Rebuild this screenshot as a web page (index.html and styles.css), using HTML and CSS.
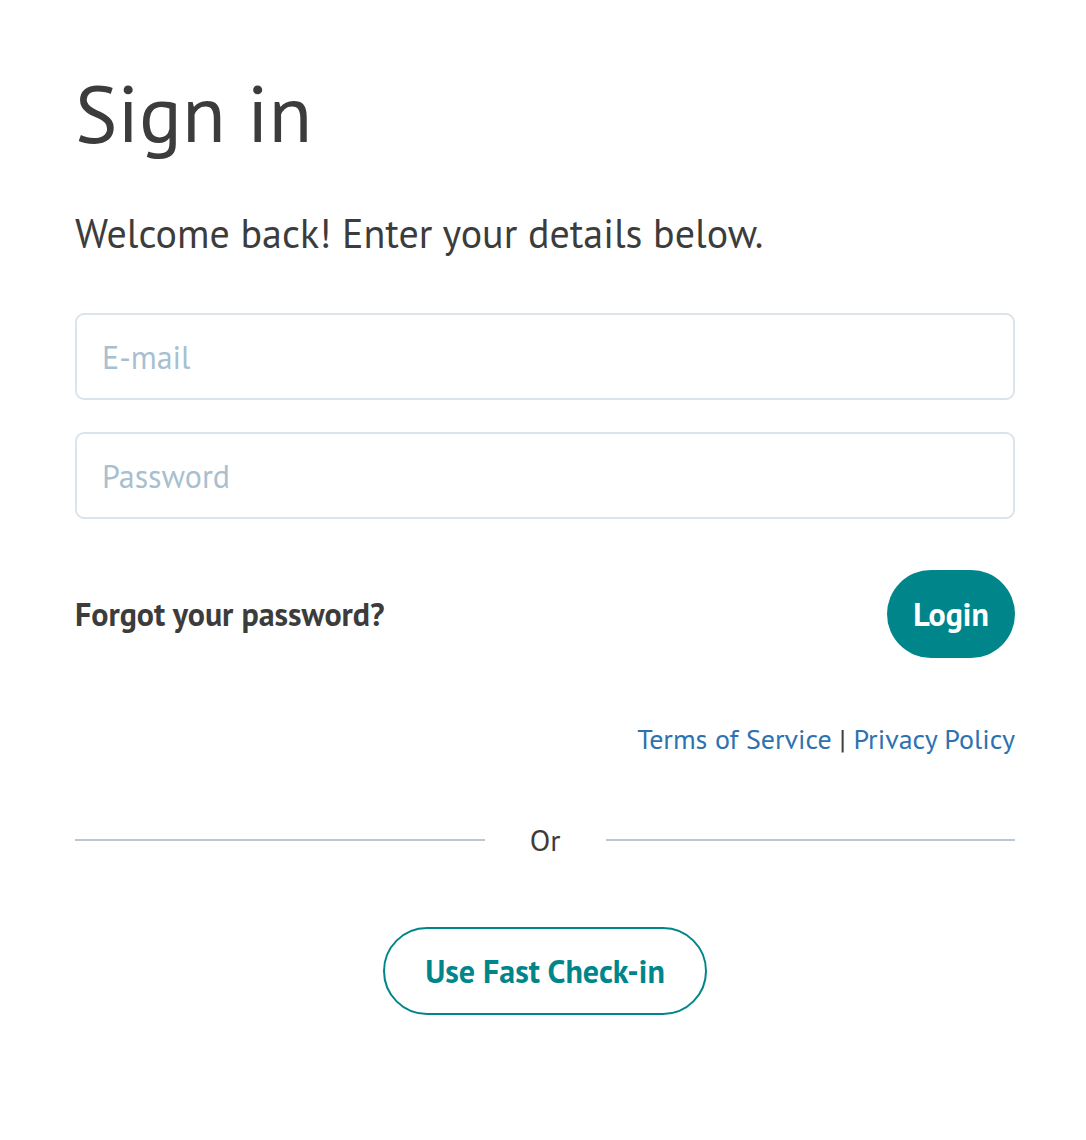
FILE: index.html
```html
<!DOCTYPE html>
<html lang="en">
<head>
    <meta charset="UTF-8">
    <meta name="viewport" content="width=device-width, initial-scale=1.0">
    <title>Sign in</title>
    <link rel="stylesheet" href="styles.css">
</head>
<body>
    <div class="signin">
        <h1>Sign in</h1>
        <p class="intro">Welcome back! Enter your details below.</p>

        <!-- Formulaire de connexion -->
        <form class="login-form" onsubmit="return false;">
            <input type="email" class="field" placeholder="E-mail">
            <input type="password" class="field" placeholder="Password">
            <div class="actions">
                <a href="#" class="forgot">Forgot your password?</a>
                <button type="submit" class="login-btn">Login</button>
            </div>
        </form>

        <div class="legal">
            <a href="#">Terms of Service</a> <span class="sep">|</span> <a href="#">Privacy Policy</a>
        </div>

        <div class="divider">
            <span class="line"></span>
            <span class="or">Or</span>
            <span class="line"></span>
        </div>

        <div class="fast">
            <button class="fast-btn">Use Fast Check-in</button>
        </div>
    </div>
</body>
</html>
```

FILE: styles.css
```css
body {
    font-family: "PT Sans", Lato, "Noto Sans", sans-serif;
    margin: 0;
    padding: 0;
    background: #fff;
    color: #3c3c3c;
}
.signin {
    padding: 58px 71px 60px 75px;
}
h1 {
    font-size: 80px;
    font-weight: 400;
    margin: 0;
    line-height: 110px;
}
.intro {
    font-size: 40px;
    margin: 40px 0 55px;
    line-height: 50px;
}
.login-form {
    display: flex;
    flex-direction: column;
    gap: 32px;
}
.field {
    box-sizing: border-box;
    height: 87px;
    width: 100%;
    border: 2px solid #dbe4eb;
    border-radius: 9px;
    padding: 0 25px;
    font-family: inherit;
    font-size: 32px;
    color: #3c3c3c;
    outline: none;
}
.field::placeholder {
    color: #a9bfcf;
}
.actions {
    display: flex;
    justify-content: space-between;
    align-items: center;
    margin-top: 19px;
}
.forgot {
    color: #3c3c3c;
    font-weight: 700;
    font-size: 32px;
    text-decoration: none;
}
.login-btn {
    background: #00868a;
    color: #fff;
    border: none;
    border-radius: 44px;
    width: 128px;
    height: 88px;
    font-family: inherit;
    font-weight: 700;
    font-size: 32px;
    cursor: pointer;
}
.legal {
    text-align: right;
    font-size: 28px;
    margin-top: 62px;
}
.legal a {
    color: #2d72af;
    text-decoration: none;
}
.sep {
    color: #3c3c3c;
}
.divider {
    display: flex;
    align-items: center;
    margin-top: 63px;
}
.line {
    flex: 1;
    height: 2px;
    background: #bac8d3;
}
.or {
    width: 121px;
    text-align: center;
    font-size: 30px;
}
.fast {
    display: flex;
    justify-content: center;
    margin-top: 68px;
}
.fast-btn {
    background: #fff;
    color: #00868a;
    border: 2px solid #00868a;
    border-radius: 44px;
    width: 324px;
    height: 88px;
    font-family: inherit;
    font-weight: 700;
    font-size: 32px;
    cursor: pointer;
}
```
